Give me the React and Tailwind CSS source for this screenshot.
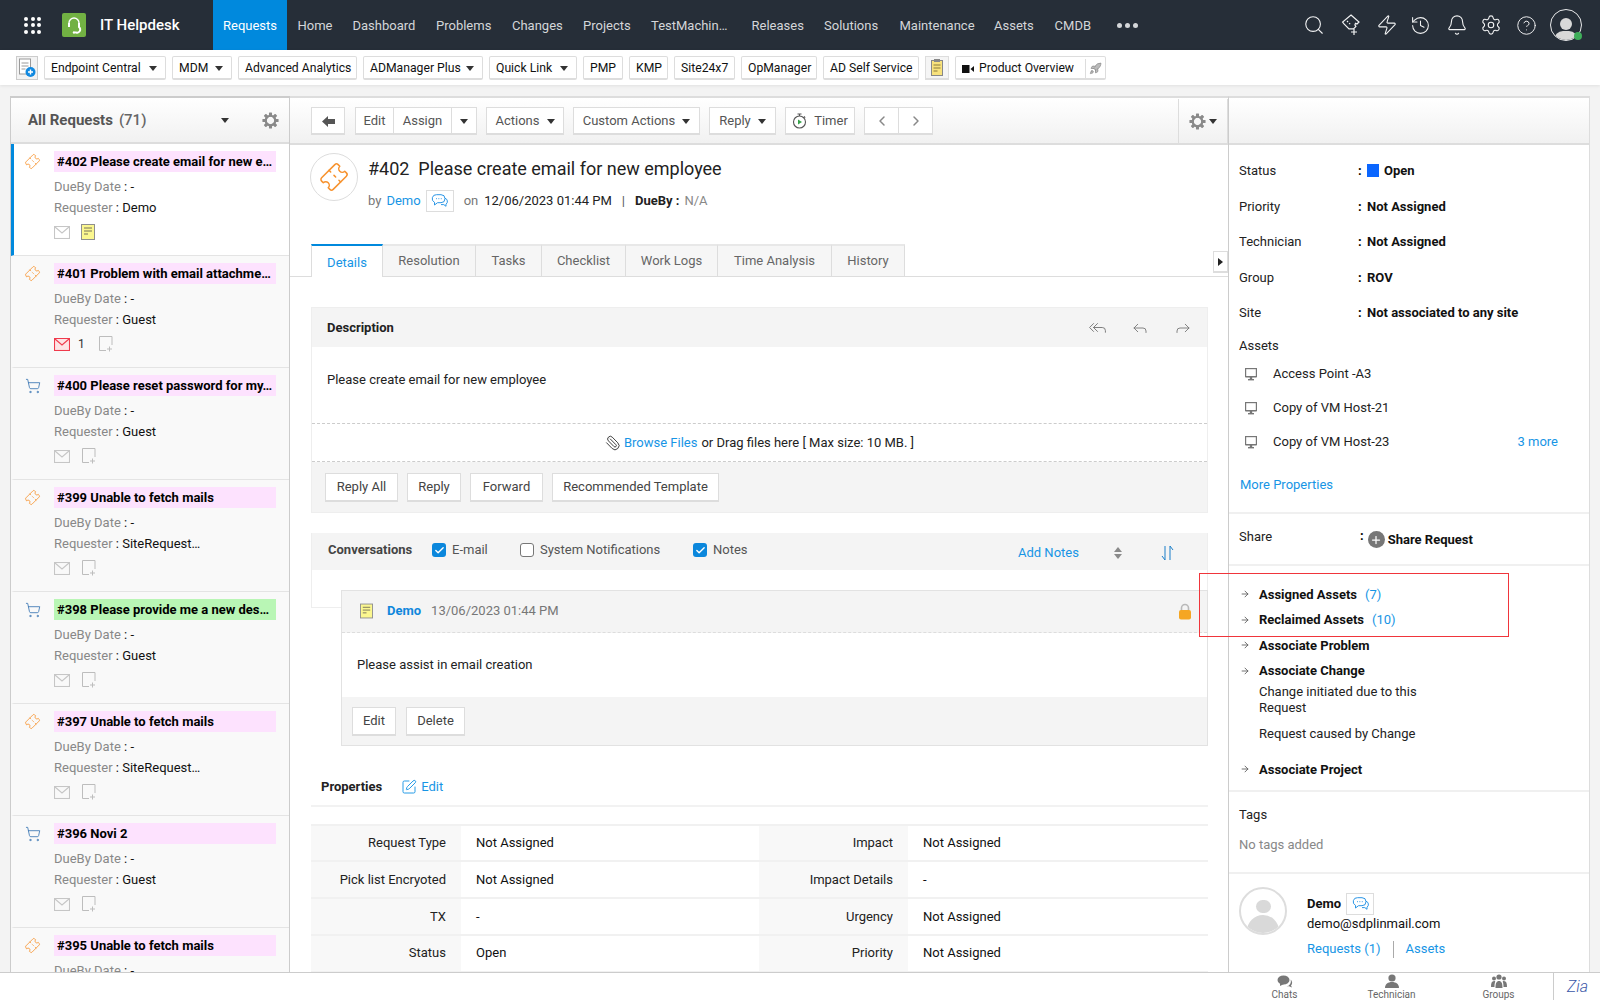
import React from 'react';
import { Search, Zap, History, Bell, Settings, CircleHelp, Ticket, ShoppingCart, Paperclip, Reply, ReplyAll, Forward, Rocket, Check, ChevronLeft, ChevronRight, ArrowRight, SquarePen, Plus } from 'lucide-react';

const Caret = ({ className = '' }) => (
  <span className={`inline-block w-0 h-0 border-l-[4px] border-r-[4px] border-t-[5px] border-l-transparent border-r-transparent border-t-[#333] ${className}`} />
);

const Gear = ({ size = 18 }) => (
  <svg width={size} height={size} viewBox="0 0 20 20" className="text-[#8a8a8a]">
    <g fill="currentColor">
      {[0, 45, 90, 135, 180, 225, 270, 315].map((a) => (
        <rect key={a} x="8.2" y="0.5" width="3.6" height="5" rx="0.6" transform={`rotate(${a} 10 10)`} />
      ))}
    </g>
    <circle cx="10" cy="10" r="5.6" fill="none" stroke="currentColor" strokeWidth="2.6" />
  </svg>
);

const Note = ({ w = 14, h = 16 }) => (
  <svg width={w} height={h} viewBox="0 0 14 16">
    <rect x="0.5" y="0.5" width="13" height="15" fill="#fbf78f" stroke="#8f8f8f" />
    <path d="M3 4h8M3 7h8M3 10h4" stroke="#77735a" strokeWidth="1" />
  </svg>
);

const NoteAdd = () => (
  <svg width="15" height="16" viewBox="0 0 15 16" fill="none" stroke="#bdbdbd">
    <path d="M8 14.5H1.5V.5h12.5V9" />
    <path d="M11.5 10.5v5M9 13h5" />
  </svg>
);

const Mail = ({ red }) => (
  <svg width="16" height="13" viewBox="0 0 16 13" fill={red ? '#fde3e5' : 'none'} stroke={red ? '#ef3a4c' : '#c6c6c6'} strokeWidth="1.1">
    <rect x="0.5" y="0.5" width="15" height="12" />
    <path d="M1 1l7 6 7-6" />
  </svg>
);

const Monitor = () => (
  <svg width="12" height="13" viewBox="0 0 12 13">
    <rect x="0.6" y="0.6" width="10.8" height="8" fill="#fff" stroke="#777" strokeWidth="1.2" />
    <rect x="0.6" y="8" width="10.8" height="1.4" fill="#777" />
    <rect x="4.8" y="9" width="2.4" height="2" fill="#777" />
    <rect x="3" y="11" width="6" height="1.4" fill="#777" />
  </svg>
);

const ChatIcon = () => (
  <svg width="17" height="13" viewBox="0 0 17 13" fill="none" stroke="#2a96e6" strokeWidth="1">
    <path d="M5.5.7h4.5a4 4 0 0 1 0 8H6.5L3.5 11V8.3A4 4 0 0 1 5.5.7z" />
    <path d="M14 4.2a3.4 3.4 0 0 1 1 6V12.3L12.8 10.6H10" />
    <path d="M5 4.7h.9M7.4 4.7h.9M9.8 4.7h.9" />
  </svg>
);

const ChatBtn = () => (
  <span className="inline-flex items-center justify-center w-[28px] h-[22px] bg-white border border-[#ddd]">
    <ChatIcon />
  </span>
);

const QBtn = ({ w, label, caret }) => (
  <div className={`${w} h-[24px] shrink-0 flex items-center justify-between pl-[6px] pr-[8px] pt-[2px] bg-white border border-[#ddd] border-b-2 rounded-[2px] text-[12.2px] text-[#111] whitespace-nowrap`}>
    <span>{label}</span>
    {caret && <Caret />}
  </div>
);

const TBtn = ({ w, children, className = '' }) => (
  <div className={`${w} h-[28px] shrink-0 flex items-center justify-center gap-[7px] pt-[1px] bg-white border border-[#ddd] border-b-2 text-[13px] text-[#555] whitespace-nowrap ${className}`}>
    {children}
  </div>
);

const nav = [
  ['Home', 'w-[55px]'],
  ['Dashboard', 'w-[83.5px]'],
  ['Problems', 'w-[76px]'],
  ['Changes', 'w-[71px]'],
  ['Projects', 'w-[68px]'],
  ['TestMachin…', 'w-[100.5px]'],
  ['Releases', 'w-[72.5px]'],
  ['Solutions', 'w-[75.5px]'],
  ['Maintenance', 'w-[94.5px]'],
  ['Assets', 'w-[60.6px]'],
  ['CMDB', 'w-[62.4px]'],
];

const items = [
  { t: '#402 Please create email for new e…', k: 'ticket', r: 'Demo', active: true },
  { t: '#401 Problem with email attachme…', k: 'ticket', r: 'Guest', red: true },
  { t: '#400 Please reset password for my…', k: 'cart', r: 'Guest' },
  { t: '#399 Unable to fetch mails', k: 'ticket', r: 'SiteRequest…' },
  { t: '#398 Please provide me a new des…', k: 'cart', r: 'Guest', green: true },
  { t: '#397 Unable to fetch mails', k: 'ticket', r: 'SiteRequest…' },
  { t: '#396 Novi 2', k: 'cart', r: 'Guest' },
  { t: '#395 Unable to fetch mails', k: 'ticket', r: 'Guest' },
];

const ListItem = ({ it }) => (
  <div className={`h-[112px] shrink-0 flex border-b border-[#e4e4e4] ${it.active ? 'bg-white border-l-[3px] border-l-[#0089dd]' : 'bg-[#f9f9f9] border-l-[3px] border-l-transparent'}`}>
    <div className="w-[40px] shrink-0 pl-[11px] pt-[10px]">
      {it.k === 'ticket' ? (
        <Ticket size={15} strokeWidth={1.2} className="-rotate-45 text-[#f7922e]" />
      ) : (
        <ShoppingCart size={16} strokeWidth={1.3} className="text-[#3d79b5]" />
      )}
    </div>
    <div className="w-[222px] pt-[7px]">
      <div className={`h-[21px] leading-[21px] pl-[3px] text-[13px] font-bold text-black whitespace-nowrap ${it.green ? 'bg-[#b9f6b5]' : 'bg-[#fde2fe]'}`}>{it.t}</div>
      <div className="mt-[4px] h-[21px] leading-[21px] text-[13px] text-[#111]"><span className="text-[#888]">DueBy Date</span> : -</div>
      <div className="h-[21px] leading-[21px] text-[13px] text-[#111]"><span className="text-[#888]">Requester</span> : {it.r}</div>
      <div className="mt-[4px] h-[20px] flex items-center text-[12px] text-[#333]">
        <Mail red={it.red} />
        {it.red && <span className="ml-[8px]">1</span>}
        <span className={it.red ? 'ml-[13px]' : 'ml-[11px]'}>{it.active ? <Note /> : <NoteAdd />}</span>
      </div>
    </div>
  </div>
);

const PropRow = ({ label, value }) => (
  <div className="h-[35.5px] flex items-center text-[13px]">
    <span className="w-[119px] text-[#222]">{label}</span>
    <span className="w-[9px] font-bold">:</span>
    <span className="font-bold text-[#111] flex items-center gap-[5px]">{value}</span>
  </div>
);

const AssetRow = ({ name, more }) => (
  <div className="h-[34px] flex items-center text-[13px] text-[#222]">
    <span className="w-[34px] pl-[6px] flex"><Monitor /></span>
    <span className="flex-1">{name}</span>
    {more && <span className="text-[#1795e5] mr-[31px]">{more}</span>}
  </div>
);

const Assoc = ({ label, count }) => (
  <div className="h-[25.5px] flex items-center text-[13px] font-bold text-[#111]">
    <ArrowRight size={10} strokeWidth={2} className="text-[#555] ml-[1px] mr-[9px]" />
    <span>{label}</span>
    {count && <span className="ml-[8px] font-normal text-[#1795e5]">{count}</span>}
  </div>
);

const Cb = ({ on }) =>
  on ? (
    <span className="w-[14px] h-[14px] rounded-[3px] bg-[#0b87dc] flex items-center justify-center"><Check size={11} strokeWidth={3} className="text-white" /></span>
  ) : (
    <span className="w-[14px] h-[14px] rounded-[3px] bg-white border border-[#777]" />
  );

const Cell = ({ l, v }) => (
  <>
    <div className="w-[150px] bg-[#f8f8f8] pr-[15px] text-right flex items-center justify-end text-[#222]">{l}</div>
    <div className="w-[298px] pl-[15px] flex items-center text-[#111]">{v}</div>
  </>
);
const Cell2 = ({ l, v }) => (
  <>
    <div className="w-[149px] bg-[#f8f8f8] pr-[15px] text-right flex items-center justify-end text-[#222]">{l}</div>
    <div className="flex-1 pl-[15px] flex items-center text-[#111]">{v}</div>
  </>
);

const rows = [
  ['Request Type', 'Not Assigned', 'Impact', 'Not Assigned'],
  ['Pick list Encryoted', 'Not Assigned', 'Impact Details', '-'],
  ['TX', '-', 'Urgency', 'Not Assigned'],
  ['Status', 'Open', 'Priority', 'Not Assigned'],
];

const FootItem = ({ label, w, children }) => (
  <div className={`${w} flex flex-col items-center text-[10px] leading-[11px] text-[#666]`}>
    {children}
    <span>{label}</span>
  </div>
);

export default function App() {
  return (
    <div className="relative w-[1600px] h-[1000px] overflow-hidden flex flex-col bg-[#f3f3f3] [font-family:Roboto,sans-serif] text-[13px]">
      <header className="h-[50px] shrink-0 bg-[#262e38] flex items-center text-[13px] text-[#d4d6d9]">
        <div className="w-[62px] pl-[24px] shrink-0 flex">
          <div className="grid grid-cols-3 gap-[2.5px]">
            {Array.from({ length: 9 }).map((_, i) => <span key={i} className="w-[4px] h-[4px] rounded-full bg-white" />)}
          </div>
        </div>
        <div className="w-[24px] h-[24px] shrink-0 rounded-[2px] bg-[#72b143] flex items-center justify-center">
          <svg width="16" height="20" viewBox="0 0 16 20" fill="none" stroke="#fff" strokeWidth="1.4"><path d="M3 11V8a5 5 0 0 1 10 0v3" /><path d="M3 8v4M13 8v4a3 3 0 0 1-4 5" strokeWidth="2" /><circle cx="8" cy="17.5" r="1.2" fill="#fff" stroke="none" /></svg>
        </div>
        <div className="w-[127px] pl-[14px] pt-[1px] shrink-0 text-[15px] font-medium text-white">IT Helpdesk</div>
        <div className="w-[74px] h-[50px] shrink-0 bg-[#0089dd] flex items-center justify-center pt-[1px] text-white">Requests</div>
        <div className="flex pl-[10.5px] pt-[1px]">
          {nav.map(([n, w]) => <span key={n} className={`${w} shrink-0 whitespace-nowrap`}>{n}</span>)}
        </div>
        <div className="flex-none w-[186px] flex gap-[3px]">
          {[0, 1, 2].map((i) => <span key={i} className="w-[5px] h-[5px] rounded-full bg-[#d4d6d9]" />)}
        </div>
        <div className="flex items-center text-[#f2f3f4]">
          <Search size={22} strokeWidth={1.2} className="mr-[15px]" />
          <svg width="22" height="24" viewBox="0 0 22 24" fill="none" stroke="currentColor" strokeWidth="1.2" className="mr-[14px]"><path d="M11 2l8 7-2 2-1.5-.6-.6 1.5 1 1.6-2.4 2.4H9l-5-5-1.4-1.8z" /><path d="M7 8l4 4" strokeDasharray="1.5 1.5" /><path d="M11 19h6M14 16v6" /></svg>
          <Zap size={22} strokeWidth={1.2} className="mr-[12px]" />
          <History size={21} strokeWidth={1.2} className="mr-[15px]" />
          <Bell size={22} strokeWidth={1.2} className="mr-[12px]" />
          <Settings size={22} strokeWidth={1.2} className="mr-[14px]" />
          <CircleHelp size={21} strokeWidth={1.1} className="mr-[13px]" />
          <div className="relative w-[32px] h-[32px] rounded-full border border-[#e8e9ea] overflow-hidden flex flex-col items-center justify-end">
            <span className="w-[12px] h-[12px] rounded-full bg-[#d8d8d8] mb-[1px]" />
            <span className="w-[24px] h-[9px] rounded-t-full bg-[#d8d8d8]" />
          </div>
          <span className="w-[8px] h-[8px] rounded-full bg-[#3fae5a] -ml-[8px] mt-[22px] z-10" />
        </div>
      </header>

      <div className="h-[35px] shrink-0 bg-white flex items-start pt-[6px] gap-[6px] pl-[16px] shadow-[0_1px_3px_rgba(0,0,0,0.08)]">
        <div className="w-[22px] h-[24px] shrink-0 bg-[#f3f3f3] border border-[#ccc] flex items-center justify-center relative">
          <svg width="18" height="20" viewBox="0 0 18 20"><rect x="1.5" y="1" width="11" height="15" fill="#fff" stroke="#9a9a9a" /><path d="M3.5 5h7M3.5 8h7M3.5 11h4" stroke="#9a9a9a" /><circle cx="12.5" cy="14" r="5" fill="#1189e0" /><path d="M12.5 11.5v5M10 14h5" stroke="#fff" strokeWidth="1.4" /></svg>
        </div>
        <QBtn w="w-[122px]" label="Endpoint Central" caret />
        <QBtn w="w-[60px]" label="MDM" caret />
        <QBtn w="w-[119px]" label="Advanced Analytics" />
        <QBtn w="w-[120px]" label="ADManager Plus" caret />
        <QBtn w="w-[88px]" label="Quick Link" caret />
        <QBtn w="w-[40px]" label="PMP" />
        <QBtn w="w-[39px]" label="KMP" />
        <QBtn w="w-[61px]" label="Site24x7" />
        <QBtn w="w-[76px]" label="OpManager" />
        <QBtn w="w-[96px]" label="AD Self Service" />
        <div className="w-[24px] h-[24px] shrink-0 bg-[#f5f5f5] border border-[#ddd] border-b-2 flex items-center justify-center">
          <svg width="12" height="17" viewBox="0 0 12 17"><rect x="0.5" y="1.5" width="11" height="15" fill="#f8e27c" stroke="#888" /><rect x="3" y="0" width="6" height="3" fill="#888" /><path d="M2.5 6h7M2.5 9h7M2.5 12h4" stroke="#8a7a3a" /></svg>
        </div>
        <div className="w-[151px] h-[24px] shrink-0 flex items-center pt-[2px] bg-white border border-[#ddd] border-b-2 rounded-[2px] text-[12.2px] text-[#111]">
          <svg width="12" height="8" viewBox="0 0 12 8" className="ml-[6px] mr-[5px]" fill="#111"><rect width="7.5" height="8" /><path d="M8.5 4L12 1v6z" /></svg>
          <span className="w-[106px] whitespace-nowrap">Product Overview</span>
          <span className="flex-1 h-full border-l border-[#ddd] flex items-center justify-center"><Rocket size={13} strokeWidth={1.4} className="text-[#8a8a8a] fill-[#bbb]" /></span>
        </div>
      </div>

      <div className="flex-1 min-h-0 flex px-[10px] pt-[11px]">
        <aside className="w-[280px] shrink-0 flex flex-col overflow-hidden bg-white border-l border-t-2 border-r border-l-[#ccc] border-r-[#ccc] border-t-[#ccc]">
          <div className="h-[46px] shrink-0 flex items-center pl-[17px] pr-[10px] bg-gradient-to-b from-white to-[#f1f1f1] border-b-2 border-[#ddd]">
            <span className="text-[15px] font-bold text-[#555]">All Requests</span>
            <span className="ml-[6px] text-[15px] font-medium text-[#666]">(71)</span>
            <Caret className="ml-auto mr-[33px]" />
            <Gear size={17} />
          </div>
          {items.map((it) => <ListItem key={it.t} it={it} />)}
        </aside>

        <main className="w-[938px] shrink-0 flex flex-col overflow-hidden bg-white border-t-2 border-[#ddd]">
          <div className="h-[47px] shrink-0 flex items-center pl-[21px] pt-[1px] bg-gradient-to-b from-white to-[#f1f1f1] border-b-2 border-[#ddd]">
            <TBtn w="w-[34px]">
              <svg width="13" height="11" viewBox="0 0 13 11" fill="#555"><path d="M0 5.5L6 0v3h7v5H6v3z" /></svg>
            </TBtn>
            <TBtn w="w-[39px]" className="ml-[10px]">Edit</TBtn>
            <TBtn w="w-[58px]" className="border-l-0">Assign</TBtn>
            <TBtn w="w-[25px]" className="border-l-0"><Caret /></TBtn>
            <TBtn w="w-[78px]" className="ml-[9px]">Actions <Caret /></TBtn>
            <TBtn w="w-[127px]" className="ml-[9px]">Custom Actions <Caret /></TBtn>
            <TBtn w="w-[67px]" className="ml-[9px]">Reply <Caret /></TBtn>
            <TBtn w="w-[70px]" className="ml-[9px]">
              <svg width="15" height="16" viewBox="0 0 15 16" fill="none" stroke="#555" strokeWidth="1.1"><circle cx="7.5" cy="9" r="6" /><path d="M5.5 1h4M7.5 1v2M12 3.5l1.2 1.2" /><path d="M6 6.5L10 9l-4 2.5z" fill="#37a34a" stroke="none" /></svg>
              Timer
            </TBtn>
            <TBtn w="w-[35px]" className="ml-[9px]"><ChevronLeft size={16} strokeWidth={2.2} className="text-[#888]" /></TBtn>
            <TBtn w="w-[34px]" className="border-l-0"><ChevronRight size={16} strokeWidth={2.2} className="text-[#888]" /></TBtn>
            <div className="ml-auto w-[50px] h-full flex items-center justify-center gap-[3px] border-l border-r border-[#ddd]">
              <Gear size={17} /><Caret />
            </div>
          </div>

          <div className="relative flex-1 min-h-0 overflow-hidden">
            <div className="h-[99px] flex pl-[20px] pt-[8px]">
              <div className="w-[48px] h-[48px] rounded-full border border-[#ddd] flex items-center justify-center">
                <Ticket size={28} strokeWidth={1.3} className="-rotate-45 text-[#f7922e]" />
              </div>
              <div className="ml-[10px]">
                <div className="text-[18px] leading-[32px] text-[#222] whitespace-pre">#402  Please create email for new employee</div>
                <div className="mt-[4px] flex items-center text-[13px] h-[24px]">
                  <span className="text-[#777]">by</span>
                  <span className="ml-[5px] text-[#1795e5]">Demo</span>
                  <span className="ml-[5px]"><ChatBtn /></span>
                  <span className="ml-[10px] text-[#777]">on</span>
                  <span className="ml-[6px] text-[#222]">12/06/2023 01:44 PM</span>
                  <span className="ml-[10px] text-[#555]">|</span>
                  <span className="ml-[10px] font-bold text-[#222]">DueBy :</span>
                  <span className="ml-[5px] text-[#888]">N/A</span>
                </div>
              </div>
            </div>

            <div className="h-[33px] flex pl-[21px] border-b border-[#ddd] text-[13px] text-[#666]">
              <div className="w-[72px] h-[33px] pt-[2px] bg-white border-t-2 border-t-[#0089dd] border-x border-x-[#ddd] flex items-center justify-center text-[#1795e5]">Details</div>
              {[['Resolution', 'w-[93px]'], ['Tasks', 'w-[66px]'], ['Checklist', 'w-[84px]'], ['Work Logs', 'w-[92px]'], ['Time Analysis', 'w-[114px]'], ['History', 'w-[73px]']].map(([t, w]) => (
                <div key={t} className={`${w} h-[32px] bg-[#f6f6f6] border-t-2 border-t-[#e8e8e8] border-r border-r-[#ddd] flex items-center justify-center`}>{t}</div>
              ))}
            </div>
            <div className="absolute left-[923px] top-[106px] w-[15px] h-[22px] bg-white border border-[#ddd] border-b-2 flex items-center justify-center">
              <span className="w-0 h-0 border-t-[4px] border-b-[4px] border-l-[5px] border-t-transparent border-b-transparent border-l-[#222]" />
            </div>

            <div className="ml-[21px] mr-[20px] mt-[30px]">
              <section className="border border-[#eee]">
                <div className="h-[39px] bg-[#f4f4f4] flex items-center pl-[15px] text-[13px] font-bold text-[#222]">
                  <span>Description</span>
                  <ReplyAll size={19} strokeWidth={1.2} className="ml-auto text-[#777]" />
                  <Reply size={18} strokeWidth={1.2} className="ml-[24px] text-[#777]" />
                  <Forward size={18} strokeWidth={1.2} className="ml-[25px] mr-[15px] text-[#777]" />
                </div>
                <div className="h-[77px] pl-[15px] pt-[24px] text-[13px] leading-[18px] text-[#222] border-b border-dashed border-[#ccc]">Please create email for new employee</div>
                <div className="h-[38px] flex items-center justify-center text-[13px] text-[#222] border-b border-dashed border-[#ccc]">
                  <Paperclip size={16} strokeWidth={1.4} className="mr-[3px] -scale-x-100 text-[#333]" />
                  <span className="text-[#1795e5]">Browse Files</span><span className="ml-[4px]">or Drag files here [ Max size: 10 MB. ]</span>
                </div>
                <div className="h-[50px] bg-[#f4f4f4] flex items-center gap-[9px] pl-[13px]">
                  {[['Reply All', 'w-[73px]'], ['Reply', 'w-[54px]'], ['Forward', 'w-[73px]'], ['Recommended Template', 'w-[167px]']].map(([t, w]) => (
                    <div key={t} className={`${w} h-[29px] bg-white border border-[#ddd] border-b-2 flex items-center justify-center text-[#444]`}>{t}</div>
                  ))}
                </div>
              </section>

              <section className="mt-[20px] border-x border-b border-[#eee] h-[75px]">
                <div className="h-[37px] bg-[#f4f4f4] flex items-center pl-[16px] pb-[3px] text-[13px] text-[#555]">
                  <span className="w-[104px] font-bold text-[#444]">Conversations</span>
                  <Cb on /><span className="ml-[6px] w-[68px]">E-mail</span>
                  <Cb /><span className="ml-[6px] w-[153px]">System Notifications</span>
                  <Cb on /><span className="ml-[6px] w-[305px]">Notes</span>
                  <span className="text-[#1795e5] w-[95px] mt-[6px]">Add Notes</span>
                  <span className="flex flex-col items-center w-[10px] gap-[2px] mt-[6px]">
                    <span className="w-0 h-0 border-l-[4px] border-r-[4px] border-b-[5px] border-l-transparent border-r-transparent border-b-[#8a8a8a]" />
                    <span className="w-0 h-0 border-l-[4px] border-r-[4px] border-t-[5px] border-l-transparent border-r-transparent border-t-[#8a8a8a]" />
                  </span>
                  <svg width="14" height="16" viewBox="0 0 14 16" fill="none" stroke="#1b7fc9" strokeWidth="1" className="ml-[38px] mt-[6px]"><path d="M4 1v14L1 11M9 15V1l3 4" /></svg>
                </div>
              </section>

              <section className="-mt-[18px] relative ml-[30px] border border-[#e2e2e2] bg-white">
                <div className="h-[42px] bg-[#f4f4f4] border-b border-dashed border-[#ddd] flex items-center pl-[18px] pb-[1px] text-[13px]">
                  <Note w={13} h={16} />
                  <span className="ml-[14px] font-bold text-[#0f87dc]">Demo</span>
                  <span className="ml-[10px] text-[#777]">13/06/2023 01:44 PM</span>
                  <svg width="14" height="17" viewBox="0 0 14 17" fill="none" className="ml-auto mr-[15px]"><path d="M3.5 8V5a3.5 3.5 0 0 1 7 0v3" stroke="#b9b9b9" strokeWidth="1.6" /><rect x="1" y="7" width="12" height="9.5" rx="2" fill="#f5a623" /></svg>
                </div>
                <div className="h-[64px] pl-[15px] flex items-center text-[13px] text-[#222]">Please assist in email creation</div>
                <div className="h-[48px] bg-[#f4f4f4] flex items-center gap-[10px] pl-[10px]">
                  <div className="w-[44px] h-[29px] bg-white border border-[#ddd] border-b-2 flex items-center justify-center text-[#444]">Edit</div>
                  <div className="w-[59px] h-[29px] bg-white border border-[#ddd] border-b-2 flex items-center justify-center text-[#444]">Delete</div>
                </div>
              </section>

              <div className="mt-[31px] h-[20px] flex items-center pl-[10px] text-[13px]">
                <span className="font-bold text-[#222]">Properties</span>
                <SquarePen size={16} strokeWidth={1.4} className="ml-[19px] text-[#1795e5]" />
                <span className="ml-[4px] text-[#1795e5]">Edit</span>
              </div>
              <div className="mt-[8px] h-[2px] bg-[#f2f2f2]" />
              <div className="mt-[16.5px] border-t-2 border-[#f1f1f1]">
                {rows.map((r) => (
                  <div key={r[0]} className="h-[36.75px] flex border-b-2 border-[#f1f1f1]">
                    <Cell l={r[0]} v={r[1]} />
                    <Cell2 l={r[2]} v={r[3]} />
                  </div>
                ))}
              </div>
            </div>
          </div>
        </main>

        <aside className="w-[362px] shrink-0 flex flex-col overflow-hidden bg-white border-l border-r border-t-2 border-l-[#ccc] border-r-[#ddd] border-t-[#ddd]">
          <div className="h-[47px] shrink-0 bg-gradient-to-b from-white to-[#f1f1f1] border-b-2 border-[#ddd]" />
          <div className="pl-[10px] pt-[8px] h-[369px] border-b-2 border-[#f0f0f0]">
            <PropRow label="Status" value={<><span className="w-[12px] h-[13px] bg-[#0a66ff]" /> Open</>} />
            <PropRow label="Priority" value="Not Assigned" />
            <PropRow label="Technician" value="Not Assigned" />
            <PropRow label="Group" value="ROV" />
            <PropRow label="Site" value="Not associated to any site" />
            <div className="h-[26.5px] pt-[3.5px] flex items-center text-[#222]">Assets</div>
            <AssetRow name="Access Point -A3" />
            <AssetRow name="Copy of VM Host-21" />
            <AssetRow name="Copy of VM Host-23" more="3 more" />
            <div className="mt-[15.5px] ml-[1px] h-[20px] flex items-center text-[#1795e5]">More Properties</div>
          </div>
          <div className="h-[52px] pl-[10px] flex items-start border-b-2 border-[#f0f0f0]">
            <span className="w-[121px] mt-[14px] leading-[18px] text-[#222]">Share</span>
            <span className="font-bold mt-[12px]">:</span>
            <span className="ml-[4px] mt-[17px] w-[17px] h-[17px] rounded-full bg-[#777] flex items-center justify-center"><Plus size={12} strokeWidth={2.5} className="text-white" /></span>
            <span className="ml-[3px] mt-[17px] leading-[18px] font-bold text-[#111]">Share Request</span>
          </div>
          <div className="h-[226px] pl-[10px] pt-[15.5px] border-b-2 border-[#f0f0f0]">
            <Assoc label="Assigned Assets" count="(7)" />
            <Assoc label="Reclaimed Assets" count="(10)" />
            <Assoc label="Associate Problem" />
            <Assoc label="Associate Change" />
            <div className="pl-[20px] text-[#222] leading-[16px] w-[210px]">Change initiated due to this Request</div>
            <div className="mt-[10px] pl-[20px] text-[#222] leading-[16px]">Request caused by Change</div>
            <div className="mt-[15px]"><Assoc label="Associate Project" /></div>
          </div>
          <div className="h-[82px] pl-[10px] pt-[13px] border-b-2 border-[#f0f0f0]">
            <div className="h-[20px] flex items-center text-[#222]">Tags</div>
            <div className="mt-[10px] h-[20px] flex items-center text-[#888]">No tags added</div>
          </div>
          <div className="flex pl-[10px] pt-[13px]">
            <div className="w-[48px] h-[48px] shrink-0 rounded-full border-2 border-[#ddd] overflow-hidden flex flex-col items-center">
              <span className="mt-[11px] w-[15px] h-[15px] rounded-full bg-[#d9d9d9]" />
              <span className="mt-[2px] w-[32px] h-[20px] rounded-t-full bg-[#d9d9d9]" />
            </div>
            <div className="ml-[20px] mt-[6.5px]">
              <div className="h-[21px] flex items-center font-bold text-[#111]">Demo<span className="ml-[5px] font-normal"><ChatBtn /></span></div>
              <div className="h-[19px] flex items-center text-[#111]">demo@sdplinmail.com</div>
              <div className="mt-[6px] h-[19px] flex items-center text-[#1795e5]">
                <span>Requests (1)</span>
                <span className="mx-[12px] w-px h-[17px] bg-[#aaa]" />
                <span>Assets</span>
              </div>
            </div>
          </div>
        </aside>
      </div>

      <footer className="h-[28px] shrink-0 relative z-10 bg-white border-t border-[#ccc] flex items-start justify-end overflow-hidden">
        <FootItem label="Chats" w="w-[107px]">
          <svg width="16" height="13" viewBox="0 0 16 13" fill="#777" className="mt-[2px] mb-[1px]"><ellipse cx="6.5" cy="5" rx="6" ry="4.5" /><path d="M3 8v3l4-2z" /><path d="M13.5 4.5a4 4 0 0 1 .5 6l1 2-3-1.2H9.5a5 5 0 0 0 4-6.8z" /></svg>
        </FootItem>
        <FootItem label="Technician" w="w-[107px]">
          <svg width="16" height="14" viewBox="0 0 16 14" fill="#777" className="mt-[1px] mb-[1px]"><circle cx="8" cy="4" r="3.6" /><path d="M1 14c0-4 3-6 7-6s7 2 7 6z" /></svg>
        </FootItem>
        <FootItem label="Groups" w="w-[107px]">
          <svg width="16" height="14" viewBox="0 0 16 14" fill="#777" className="mt-[1px] mb-[1px]"><circle cx="8" cy="3" r="2.6" /><circle cx="3" cy="4.5" r="2" /><circle cx="13" cy="4.5" r="2" /><path d="M4.5 14c0-5 1-7 3.5-7s3.5 2 3.5 7zM0 13c0-4 .7-6 3-6 .6 0 1 .1 1.3.4C3.6 9 3.5 11 3.5 13zM16 13c0-4-.7-6-3-6-.6 0-1 .1-1.3.4.7 1.6.8 3.6.8 5.6z" /></svg>
        </FootItem>
        <div className="w-[47px] h-full ml-[1px] pl-[13px] border-l border-[#ccc] flex items-center text-[16px] italic font-light text-[#3a57a8]">Zia</div>
      </footer>

      <div className="absolute left-[1199px] top-[573px] w-[310px] h-[64px] border border-[#f0353b] pointer-events-none z-20" />
    </div>
  );
}
